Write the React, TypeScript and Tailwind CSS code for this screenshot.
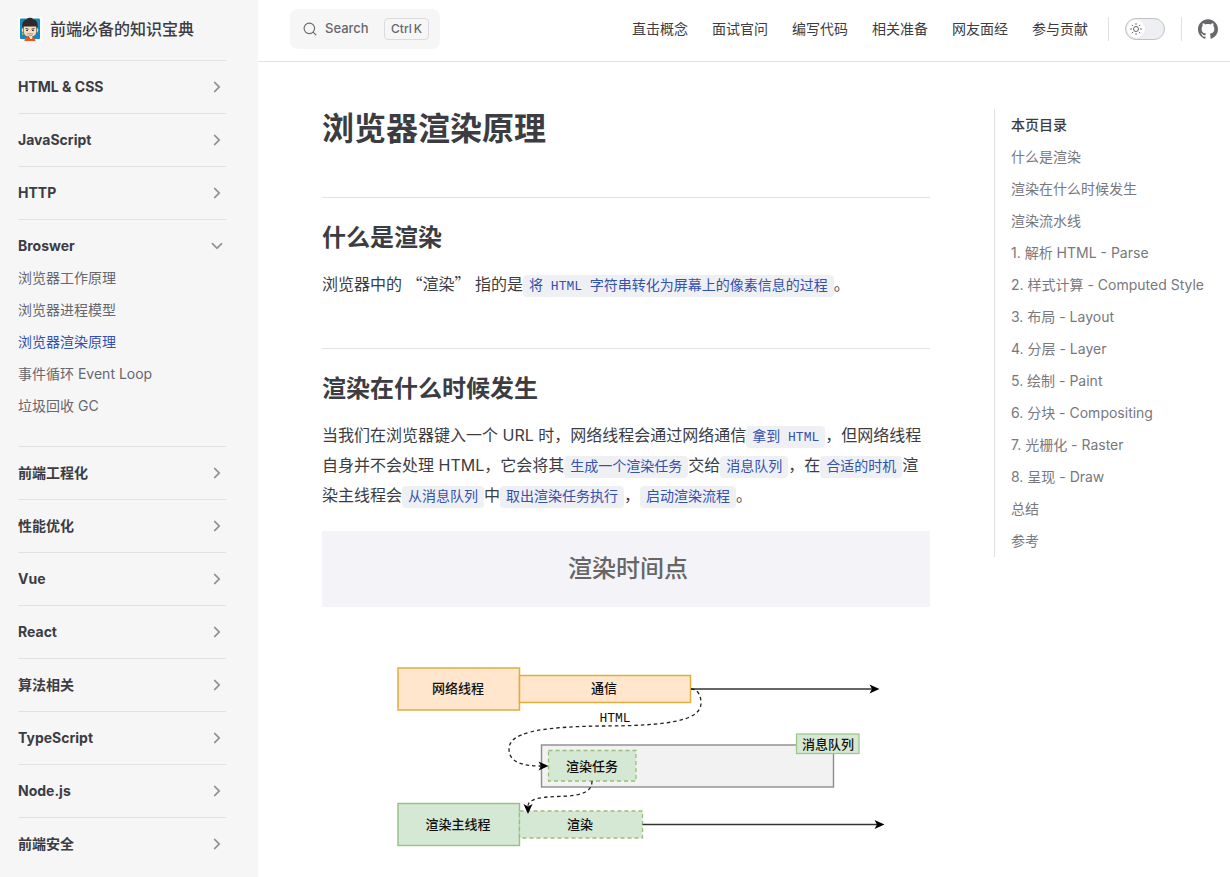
import { useState } from 'react';
import type { ReactNode } from 'react';

const navLinks = ['直击概念', '面试官问', '编写代码', '相关准备', '网友面经', '参与贡献'];

const sidebar: { title: string; items: string[] }[] = [
  { title: 'HTML & CSS', items: [] },
  { title: 'JavaScript', items: [] },
  { title: 'HTTP', items: [] },
  {
    title: 'Broswer',
    items: ['浏览器工作原理', '浏览器进程模型', '浏览器渲染原理', '事件循环 Event Loop', '垃圾回收 GC'],
  },
  { title: '前端工程化', items: [] },
  { title: '性能优化', items: [] },
  { title: 'Vue', items: [] },
  { title: 'React', items: [] },
  { title: '算法相关', items: [] },
  { title: 'TypeScript', items: [] },
  { title: 'Node.js', items: [] },
  { title: '前端安全', items: [] },
];

const outline = [
  '什么是渲染',
  '渲染在什么时候发生',
  '渲染流水线',
  '1. 解析 HTML - Parse',
  '2. 样式计算 - Computed Style',
  '3. 布局 - Layout',
  '4. 分层 - Layer',
  '5. 绘制 - Paint',
  '6. 分块 - Compositing',
  '7. 光栅化 - Raster',
  '8. 呈现 - Draw',
  '总结',
  '参考',
];

export default function App() {
  return (
    <div className="flex min-h-screen bg-white font-['Inter','Noto_Sans_CJK_SC',sans-serif] text-[#3c3c43]">
      <Sidebar />
      <div className="flex min-w-0 flex-1 flex-col">
        <Header />
        <div className="flex gap-16 pt-[47px] pl-16">
          <Article />
          <Outline />
        </div>
      </div>
    </div>
  );
}

function Sidebar() {
  const [open, setOpen] = useState('Broswer');

  return (
    <aside className="w-[258px] shrink-0 bg-[#f6f6f7] pr-8 pl-[18px]">
      <a href="#" className="flex h-[60px] items-center gap-2 pb-0.5 font-medium">
        <Logo />
        前端必备的知识宝典
      </a>
      <nav>
        {sidebar.map(({ title, items }) => {
          const expanded = open === title;
          return (
            <section
              key={title}
              className={`border-t border-[#e2e2e3] pt-2.5 ${expanded ? 'pb-6' : 'pb-2.5'}`}
            >
              <button
                type="button"
                aria-expanded={expanded}
                onClick={() => setOpen(expanded ? '' : title)}
                className="flex h-8 w-full items-center justify-between text-left text-sm font-bold"
              >
                {title}
                <Caret className={`size-[18px] text-[#8e8e93] ${expanded ? 'rotate-90' : ''}`} />
              </button>
              {expanded &&
                items.map((item) => (
                  <a
                    key={item}
                    href="#"
                    className={`block text-sm leading-8 ${item === '浏览器渲染原理' ? 'text-[#3451b2]' : 'text-[#67676c]'}`}
                  >
                    {item}
                  </a>
                ))}
            </section>
          );
        })}
      </nav>
    </aside>
  );
}

function Header() {
  const [dark, setDark] = useState(false);

  return (
    <header className="flex h-[62px] items-center border-b border-[#e2e2e3] pr-3 pb-[3px] pl-8">
      <button
        type="button"
        className="flex h-10 w-[150px] items-center rounded-lg bg-[#f6f6f7] pr-[11px] pl-[13px] text-[13px] font-medium text-[#67676c]"
      >
        <SearchIcon />
        <span className="ml-2">Search</span>
        <kbd className="ml-auto flex h-[22px] items-center gap-0.5 rounded border border-[#dcdcde] px-1.5 font-['Inter',sans-serif] text-xs font-medium">
          <span>Ctrl</span>
          <span>K</span>
        </kbd>
      </button>

      <nav className="ml-auto flex gap-6 text-sm">
        {navLinks.map((link) => (
          <a key={link} href="#">
            {link}
          </a>
        ))}
      </nav>

      <div className="ml-5 flex items-center gap-4">
        <div className="h-6 w-px bg-[#e2e2e3]" />
        <button
          type="button"
          role="switch"
          aria-checked={dark}
          aria-label="toggle dark mode"
          onClick={() => setDark(!dark)}
          className="flex h-[22px] w-10 items-center rounded-full border border-[#c2c2c4] bg-[#eeeff3] p-px"
        >
          <span
            className={`flex size-[18px] items-center justify-center rounded-full bg-white shadow-xs ${dark ? 'ml-auto' : ''}`}
          >
            <SunIcon />
          </span>
        </button>
        <div className="h-6 w-px bg-[#e2e2e3]" />
        <a href="#" aria-label="github" className="text-[#67676c]">
          <GithubIcon />
        </a>
      </div>
    </header>
  );
}

function Article() {
  return (
    <main className="min-w-0 flex-1">
      <h1 className="text-[32px] leading-10 font-bold">浏览器渲染原理</h1>

      <Heading>什么是渲染</Heading>
      <Paragraph>
        浏览器中的 <span className="font-['Noto_Sans_CJK_SC',sans-serif] leading-none">“渲染”</span> 指的是
        <Code>
          将<Latin> HTML </Latin>字符串转化为屏幕上的像素信息的过程
        </Code>
        。
      </Paragraph>

      <Heading>渲染在什么时候发生</Heading>
      <Paragraph>
        当我们在浏览器键入一个 URL 时，网络线程会通过网络通信
        <Code>
          拿到<Latin> HTML</Latin>
        </Code>
        ，但网络线程自身并不会处理 HTML，它会将其
        <Code>生成一个渲染任务</Code>交给<Code>消息队列</Code>，在<Code>合适的时机</Code>渲染主线程会
        <Code>从消息队列</Code>中<Code>取出渲染任务执行</Code>，<Code>启动渲染流程</Code>。
      </Paragraph>

      <Diagram />
    </main>
  );
}

function Heading({ children }: { children: ReactNode }) {
  return (
    <h2 className="mt-12 border-t border-[#e2e2e3] pt-6 text-2xl leading-8 font-bold">{children}</h2>
  );
}

function Paragraph({ children }: { children: ReactNode }) {
  return <p className="mt-[15px] pb-px leading-[30px]">{children}</p>;
}

function Code({ children }: { children: ReactNode }) {
  return (
    <code className="rounded bg-[#8e96aa]/14 px-1.5 py-[3px] font-['Liberation_Mono','Noto_Sans_CJK_SC',monospace] text-sm leading-none text-[#3451b2]">
      {children}
    </code>
  );
}

function Latin({ children }: { children: ReactNode }) {
  return <span className="text-[13px]">{children}</span>;
}

function Outline() {
  return (
    <aside className="w-[236px] shrink-0 self-start border-l border-[#e2e2e3] pl-4 text-sm leading-8">
      <div className="font-medium">本页目录</div>
      <nav>
        {outline.map((item) => (
          <a key={item} href="#" className="block truncate text-[#78787d]">
            {item}
          </a>
        ))}
      </nav>
    </aside>
  );
}

function Diagram() {
  return (
    <svg
      viewBox="0 0 608 346"
      className="mt-5 w-full font-['Noto_Sans_CJK_SC',sans-serif] text-[13px] font-medium"
      textAnchor="middle"
      role="img"
      aria-label="渲染时间点"
    >
      <rect width="608" height="76" fill="#f4f3f8" />
      <text x="306" y="46" fill="#666" className="text-2xl font-medium">
        渲染时间点
      </text>

      {/* network thread */}
      <g fill="#ffe6cc" stroke="#dfae3c" strokeWidth="1.5">
        <rect x="76" y="137" width="121.5" height="42" />
        <rect x="197.5" y="144.5" width="171" height="27" />
      </g>
      <path d="M369 158H550" stroke="#333" strokeWidth="1.3" />
      <path d="M557.5 158l-10-4.5 2.5 4.5-2.5 4.5z" fill="#000" />

      {/* message queue */}
      <rect x="219.5" y="214" width="292" height="42" fill="#f2f2f2" stroke="#8c8c8c" strokeWidth="1.4" />
      <rect x="226.5" y="219.5" width="87.5" height="30.5" fill="#d5e8d4" stroke="#97c077" strokeWidth="1.3" strokeDasharray="4 3" />
      <rect x="474.5" y="203" width="62.5" height="19.5" fill="#d5e8d4" stroke="#9fc78a" strokeWidth="1.3" />

      {/* render main thread */}
      <rect x="76" y="272.5" width="121.5" height="42" fill="#d5e8d4" stroke="#97c083" strokeWidth="1.4" />
      <rect x="197.5" y="280" width="123" height="27" fill="#d5e8d4" stroke="#97c077" strokeWidth="1.3" strokeDasharray="4 3" />
      <path d="M320.5 293.5H555" stroke="#333" strokeWidth="1.3" />
      <path d="M562.5 293.5l-10-4.5 2.5 4.5-2.5 4.5z" fill="#000" />

      <g fill="none" stroke="#222" strokeWidth="1.3" strokeDasharray="3.5 3">
        <path d="M369 158C376 158 379 165 379 172C379 190 345 195 278 195C215 196 187 202 187 218C187 231 200 235 219 235" />
        <path d="M270 250C270 262 258 265 235 265.5C215 266 206 269 206 275" />
      </g>
      <path d="M226.5 235l-10-4.5 2.5 4.5-2.5 4.5z" fill="#000" />
      <path d="M206 283l-4.5-10 4.5 2.5 4.5-2.5z" fill="#000" />

      <g fill="#111">
        <text x="136" y="162">网络线程</text>
        <text x="282" y="162">通信</text>
        <text x="293" y="191" className="font-['Liberation_Mono',monospace]">HTML</text>
        <text x="270" y="240">渲染任务</text>
        <text x="506" y="218">消息队列</text>
        <text x="136" y="298">渲染主线程</text>
        <text x="258" y="298">渲染</text>
      </g>
    </svg>
  );
}

function Logo() {
  return (
    <svg viewBox="0 0 24 24" className="size-6" aria-hidden="true">
      <rect width="24" height="24" fill="#fff" />
      <rect x="2" y="1.5" width="20" height="20.5" rx="1" fill="#0f8ac4" />
      <path d="M6.5 24c0-3.5 2-5 5.5-5s5 1.5 5.5 5z" fill="#f4511e" />
      <path d="M4 11.5h2v4H5c-1 0-1.5-3-1-4zM20 11.5h-2v4h1c1 0 1.5-3 1-4z" fill="#f3d6b3" />
      <circle cx="4.8" cy="16.8" r="1" fill="#e0c03c" />
      <path d="M5.5 8h13v7c0 3-2.5 5-6.5 5s-6.5-2-6.5-5z" fill="#f6dcbc" stroke="#3a2c26" strokeWidth=".5" />
      <path d="M4.5 11C3.5 5 6 3 8.5 2.5 9.5.5 14 0 15 2.3c3 .5 5.5 3 4.5 8.7l-1-1.5h-13z" fill="#30292b" />
      <path d="M7.5 11.5l3 .7M16.5 11.5l-3 .7" stroke="#30292b" strokeWidth=".9" />
      <path d="M8.2 13.5H10M14 13.5h1.8" stroke="#30292b" strokeWidth="1.2" />
      <path d="M9 17.3c1.5-1 4.5-1 6 0" fill="none" stroke="#a3a3a3" strokeWidth="1.2" />
      <path d="M10.5 19c1.5-1.5 4-.5 4.5 1l-1 2.5h-2z" fill="#f9e3c8" stroke="#3a2c26" strokeWidth=".4" />
    </svg>
  );
}

function Caret({ className }: { className: string }) {
  return (
    <svg viewBox="0 0 24 24" fill="currentColor" stroke="currentColor" strokeWidth=".4" className={className} aria-hidden="true">
      <path d="M9,19c-0.3,0-0.5-0.1-0.7-0.3c-0.4-0.4-0.4-1,0-1.4l5.3-5.3L8.3,6.7c-0.4-0.4-0.4-1,0-1.4s1-0.4,1.4,0l6,6c0.4,0.4,0.4,1,0,1.4l-6,6C9.5,18.9,9.3,19,9,19z" />
    </svg>
  );
}

function SearchIcon() {
  return (
    <svg viewBox="0 0 20 20" className="size-3.5" aria-hidden="true">
      <path
        d="M14.386 14.386l4.088 4.088-4.088-4.088c-2.942 2.942-7.711 2.942-10.653 0-2.942-2.942-2.942-7.711 0-10.653 2.942-2.942 7.711-2.942 10.653 0 2.942 2.942 2.942 7.711 0 10.653z"
        fill="none"
        stroke="currentColor"
        strokeWidth="1.6"
        strokeLinecap="round"
        strokeLinejoin="round"
      />
    </svg>
  );
}

function SunIcon() {
  return (
    <svg viewBox="0 0 24 24" className="size-3 text-[#67676c]" aria-hidden="true">
      <circle cx="12" cy="12" r="5" fill="none" stroke="currentColor" strokeWidth="2" />
      <path
        d="M12 1v2M12 21v2M1 12h2M21 12h2M4.2 4.2l1.4 1.4M18.4 18.4l1.4 1.4M4.2 19.8l1.4-1.4M18.4 5.6l1.4-1.4"
        stroke="currentColor"
        strokeWidth="2"
        strokeLinecap="round"
      />
    </svg>
  );
}

function GithubIcon() {
  return (
    <svg viewBox="0 0 24 24" fill="currentColor" className="size-5" aria-hidden="true">
      <path d="M12 .297c-6.63 0-12 5.373-12 12 0 5.303 3.438 9.8 8.205 11.385.6.113.82-.258.82-.577 0-.285-.01-1.04-.015-2.04-3.338.724-4.042-1.61-4.042-1.61C4.422 18.07 3.633 17.7 3.633 17.7c-1.087-.744.084-.729.084-.729 1.205.084 1.838 1.236 1.838 1.236 1.07 1.835 2.809 1.305 3.495.998.108-.776.417-1.305.76-1.605-2.665-.3-5.466-1.332-5.466-5.93 0-1.31.465-2.38 1.235-3.22-.135-.303-.54-1.523.105-3.176 0 0 1.005-.322 3.3 1.23.96-.267 1.98-.399 3-.405 1.02.006 2.04.138 3 .405 2.28-1.552 3.285-1.23 3.285-1.23.645 1.653.24 2.873.12 3.176.765.84 1.23 1.91 1.23 3.22 0 4.61-2.805 5.625-5.475 5.92.42.36.81 1.096.81 2.22 0 1.606-.015 2.896-.015 3.286 0 .315.21.69.825.57C20.565 22.092 24 17.592 24 12.297c0-6.627-5.373-12-12-12" />
    </svg>
  );
}
